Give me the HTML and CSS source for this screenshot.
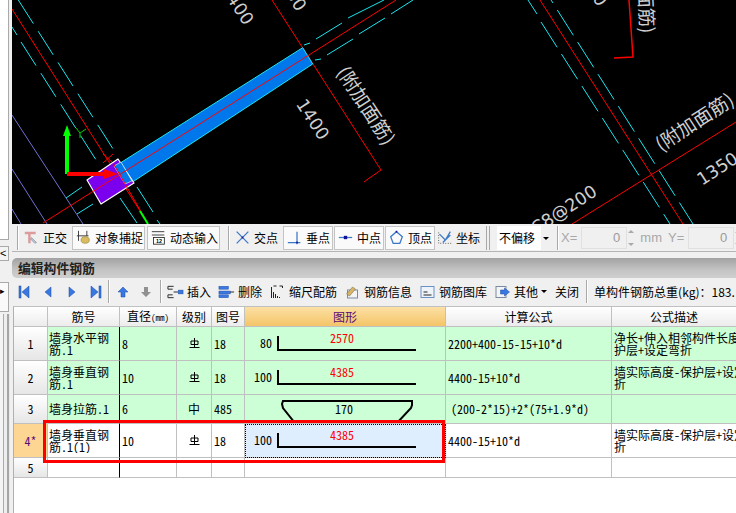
FILE: index.html
```html
<!DOCTYPE html>
<html lang="zh-CN">
<head>
<meta charset="utf-8">
<title>编辑构件钢筋</title>
<link rel="stylesheet" href="styles.css">
</head>
<body>
<div class="app">
  <aside class="strip">
    <div class="strip-white"></div>
    <div class="strip-btn">&lt;</div>
    <div class="strip-box">▸</div>
    <div class="strip-rails"></div>
  </aside>
  <main class="main">
    <svg class="cad" width="724" height="224" viewBox="12 0 724 224">
      <g class="violet">
        <line x1="12" y1="115" x2="83" y2="224"/>
        <line x1="12" y1="169" x2="47" y2="224"/>
        <line x1="12" y1="209" x2="21" y2="224"/>
      </g>
      <g class="cyan">
        <line class="dash-a" x1="18.3" y1="0" x2="115" y2="152"/>
        <line class="dash-a" x1="21" y1="42" x2="98" y2="163"/>
        <line x1="12" y1="27" x2="17" y2="35"/>
        <line x1="120" y1="198" x2="137" y2="223"/>
        <line x1="137" y1="187" x2="153" y2="212"/>
        <line x1="157" y1="220" x2="160" y2="224"/>
        <line x1="66" y1="198" x2="82" y2="187"/>
        <line x1="77" y1="214" x2="93" y2="204"/>
        <line x1="304" y1="45" x2="310" y2="43"/>
        <line x1="316" y1="39" x2="342" y2="23"/>
        <line x1="348" y1="18" x2="384" y2="0"/>
        <line x1="315" y1="60" x2="321" y2="59"/>
        <line x1="327" y1="55" x2="353" y2="39"/>
        <line x1="359" y1="34" x2="385" y2="18"/>
        <line x1="391" y1="14" x2="413" y2="0"/>
        <line x1="528" y1="0" x2="537" y2="14"/>
        <line class="dash-b" x1="541" y1="22" x2="670" y2="224"/>
        <line x1="551" y1="0" x2="553" y2="3"/>
        <line class="dash-b" x1="557.3" y1="10" x2="693" y2="224"/>
      </g>
      <g class="red">
        <line x1="12" y1="9" x2="147" y2="222"/>
        <line x1="272" y1="0" x2="381" y2="170"/>
        <polyline points="381,170 368,179 364,182"/>
        <line x1="540" y1="0" x2="683" y2="224"/>
        <line x1="572" y1="224" x2="736" y2="122"/>
        <polyline class="thick" points="629,0 633,57 614,58"/>
        <line x1="103" y1="154" x2="113" y2="163"/>
        <line x1="103" y1="163" x2="113" y2="154"/>
      </g>
      <polygon class="beam" points="302.7,47.7 312.7,64 133,181.7 120.7,162.7"/>
      <polygon class="base" points="87,180 118,159 134,183 101,204"/>
      <polygon class="beam-end" points="114,166 121,162 132,181 125,184"/>
      <line class="red" x1="43" y1="223" x2="396" y2="0"/>
      <line class="red" x1="113" y1="163" x2="147" y2="222"/>
      <line class="axis-y-stroke" x1="67" y1="174" x2="67" y2="132"/>
      <polygon class="axis-y-head" points="67,125 71,136 63,136"/>
      <polyline class="axis-label" points="76,128 80,133 86,129"/>
      <line class="axis-label" x1="80" y1="133" x2="80" y2="138"/>
      <line class="axis-x-stroke" x1="67" y1="174" x2="106" y2="174"/>
      <polygon class="axis-x-head" points="118,174 104,169 104,179"/>
      <line class="axis-green" x1="140" y1="211" x2="148" y2="224"/>
      <g class="cad-text">
        <text transform="translate(220,-11) rotate(57)">1400</text>
        <text transform="translate(285,-6) rotate(57)">50</text>
        <text transform="translate(295.500,104) rotate(57)">1400</text>
        <text class="cjk" transform="translate(336,72) rotate(57)">(附加面筋)</text>
        <text class="cjk" transform="translate(636,-55) rotate(87)">(附加面筋)</text>
        <text class="cjk" transform="translate(661,152) rotate(-33)">(附加面筋)</text>
        <text transform="translate(702,186) rotate(-33)">1350</text>
        <text transform="translate(536,235) rotate(-33)">C8@200</text>
        <text transform="translate(586,-11) rotate(57)">50</text>
      </g>
    </svg>

    <div class="snapbar">
      <span class="sep"></span>
      <div class="snap">
        <svg class="ico" viewBox="0 0 18 18"><path class="ortho" d="M1 2h13v3H8v11H5V5H1z"/><path class="pen" d="M9 9l6 6-2 1-5-5z"/></svg>
        <span>正交</span>
      </div>
      <div class="snap on wide first">
        <svg class="ico" viewBox="0 0 18 18"><path class="dark" d="M3 1v12M13 1v6M1 7h14"/><ellipse class="hand" cx="11" cy="12" rx="5" ry="4"/></svg>
        <span>对象捕捉</span>
      </div>
      <div class="snap on wide">
        <svg class="ico" viewBox="0 0 18 18"><path class="dark" d="M1 2h15M1 6h15"/><rect class="kbd" x="3" y="9" width="13" height="8"/><text class="kbd-num" x="9.500" y="15.500" text-anchor="middle">12</text></svg>
        <span>动态输入</span>
      </div>
      <span class="sep gap"></span>
      <div class="snap">
        <svg class="ico" viewBox="0 0 18 18"><path class="blue" d="M2 2l14 14M16 2L2 16"/><rect class="navy" x="8" y="8" width="2" height="2"/></svg>
        <span>交点</span>
      </div>
      <div class="snap on mid first">
        <svg class="ico" viewBox="0 0 18 18"><path class="blue" d="M1 15h15M12 2v15"/><rect class="navy" x="11" y="14" width="2" height="2"/></svg>
        <span>垂点</span>
      </div>
      <div class="snap on mid">
        <svg class="ico" viewBox="0 0 18 18"><path class="blue" d="M1 9h16"/><rect class="navy" x="7" y="7" width="4" height="4"/></svg>
        <span>中点</span>
      </div>
      <div class="snap on mid">
        <svg class="ico" viewBox="0 0 18 18"><path class="blue" d="M9 2l7 6-3 8H5L2 8z"/><rect class="navy" x="8" y="1" width="2" height="2"/></svg>
        <span>顶点</span>
      </div>
      <div class="snap last">
        <svg class="ico" viewBox="0 0 18 18"><path class="dots" d="M2 3v13h15"/><path class="blue" d="M3 5l7 7 6-10M7 15l9-9"/></svg>
        <span>坐标</span>
      </div>
      <span class="sep double"></span>
      <div class="offset-select"><span class="offset-text">不偏移</span><span class="caret"></span></div>
      <span class="sep tight"></span>
      <span class="dim">X=</span>
      <div class="spin"><span class="spin-box">0</span><i class="spin-arrows"></i></div>
      <span class="dim mm">mm</span>
      <span class="dim">Y=</span>
      <div class="spin"><span class="spin-box">0</span><i class="spin-arrows"></i></div>
    </div>

    <div class="panel-title">编辑构件钢筋</div>

    <div class="gridbar">
      <div class="navgroup">
        <svg class="nav" viewBox="0 0 12 14"><rect class="navfill" x="1" y="1" width="2" height="12"/><path class="navfill" d="M11 1v12L4 7z"/></svg>
        <svg class="nav" viewBox="0 0 12 14"><path class="navfill" d="M9 2v10L3 7z"/></svg>
        <svg class="nav" viewBox="0 0 12 14"><path class="navfill" d="M3 2v10l6-5z"/></svg>
        <svg class="nav" viewBox="0 0 12 14"><path class="navfill" d="M1 1v12l7-6z"/><rect class="navfill" x="9" y="1" width="2" height="12"/></svg>
      </div>
      <span class="sep tall"></span>
      <div class="navgroup updown">
        <svg class="nav small" viewBox="0 0 12 12"><path class="navfill" d="M6 1l5 5H8v5H4V6H1z"/></svg>
        <svg class="nav small" viewBox="0 0 12 12"><path class="greyfill" d="M4 1h4v5h3l-5 5-5-5h3z"/></svg>
      </div>
      <span class="sep tall wider"></span>
      <div class="cmd"><svg class="cmdico" viewBox="0 0 18 14"><path class="dark" d="M7 1H1v3h5M7 13H1v-3h5"/><path class="dark" d="M7 7h5"/><rect class="navfill" x="12" y="5" width="5" height="4"/></svg><span>插入</span></div>
      <div class="cmd"><svg class="cmdico" viewBox="0 0 18 14"><rect class="navfill" x="1" y="1" width="10" height="3"/><rect class="navfill" x="1" y="6" width="12" height="3"/><rect class="navfill" x="1" y="10" width="10" height="3"/><path class="dark" d="M13 7h4"/></svg><span>删除</span></div>
      <div class="cmd"><svg class="cmdico" viewBox="0 0 14 14"><path class="dark" d="M1 2v11M3 7v6M5 9v4M7 11v2M9 12v1M3 1h3M9 1h3M12 1v2"/></svg><span>缩尺配筋</span></div>
      <div class="cmd"><svg class="cmdico" viewBox="0 0 14 14"><rect class="sheet" x="2" y="5" width="10" height="8"/><path class="pencil" d="M1 9l6-7 3 2-6 7z"/></svg><span>钢筋信息</span></div>
      <div class="cmd"><svg class="cmdico" viewBox="0 0 14 14"><rect class="sheet-blue" x="0.500" y="1.500" width="13" height="11"/><path class="dark" d="M3 7h4M3 10h8"/></svg><span>钢筋图库</span></div>
      <div class="cmd"><svg class="cmdico" viewBox="0 0 14 14"><rect class="sheet" x="0.500" y="1.500" width="10" height="11"/><path class="navfill" d="M5 5h4V3l5 4-5 4V9H5z"/></svg><span>其他</span><span class="mini-caret"></span></div>
      <div class="cmd"><span>关闭</span></div>
      <span class="sep tall close"></span>
      <div class="cmd total"><span>单构件钢筋总重(kg)：183.</span></div>
    </div>

    <div class="table-wrap">
      <table class="rebar">
        <colgroup>
          <col class="c-row"><col class="c-name"><col class="c-dia"><col class="c-grade"><col class="c-fig"><col class="c-shape"><col class="c-calc"><col class="c-desc">
        </colgroup>
        <thead>
          <tr>
            <th></th><th class="black-r">筋号</th><th>直径<small>(mm)</small></th><th>级别</th><th>图号</th><th class="sel-head">图形</th><th>计算公式</th><th>公式描述</th>
          </tr>
        </thead>
        <tbody>
          <tr class="r1 done">
            <td class="rowh">1</td><td class="name black-r"><div class="two">墙身水平钢筋.1</div></td><td>8</td>
            <td class="ctr"><svg class="grade" viewBox="0 0 11 11"><path d="M5.500 0v9M2 3h7v3.500H2zM0.500 9.500h10"/></svg></td><td>18</td>
            <td class="shape"><svg viewBox="0 0 200 33" width="200" height="33"><path class="bar" d="M33 9v14h138"/><text class="txt-red" x="97" y="16" text-anchor="middle">2570</text><text class="txt-blk" x="27" y="21" text-anchor="end">80</text></svg></td>
            <td class="calc">2200+400-15-15+10*d</td><td><div class="desc">净长+伸入相邻构件长度-保<br>护层+设定弯折</div></td>
          </tr>
          <tr class="r2 done">
            <td class="rowh">2</td><td class="name black-r"><div class="two">墙身垂直钢筋.1</div></td><td>10</td>
            <td class="ctr"><svg class="grade" viewBox="0 0 11 11"><path d="M5.500 0v9M2 3h7v3.500H2zM0.500 9.500h10"/></svg></td><td>18</td>
            <td class="shape"><svg viewBox="0 0 200 33" width="200" height="33"><path class="bar" d="M33 9v14h138"/><text class="txt-red" x="97" y="16" text-anchor="middle">4385</text><text class="txt-blk" x="27" y="21" text-anchor="end">100</text></svg></td>
            <td class="calc">4400-15+10*d</td><td><div class="desc">墙实际高度-保护层+设定弯<br>折</div></td>
          </tr>
          <tr class="r3 done">
            <td class="rowh">3</td><td class="name black-r">墙身拉筋.1</td><td>6</td>
            <td class="ctr">中</td><td>485</td>
            <td class="shape"><svg viewBox="0 0 200 28" width="200" height="28"><path class="bar" d="M50 28L38 13l-1-4 1-3h129v4l-1 3-14 15"/><text class="txt-blk" x="99" y="19" text-anchor="middle">170</text></svg></td>
            <td class="calc pad">(200-2*15)+2*(75+1.9*d)</td><td></td>
          </tr>
          <tr class="r4 current">
            <td class="rowh act">4*</td><td class="name black-r"><div class="two">墙身垂直钢筋.1(1)</div></td><td>10</td>
            <td class="ctr"><svg class="grade" viewBox="0 0 11 11"><path d="M5.500 0v9M2 3h7v3.500H2zM0.500 9.500h10"/></svg></td><td>18</td>
            <td class="shape focus"><svg viewBox="0 0 200 33" width="200" height="33"><path class="bar" d="M33 9v14h138"/><text class="txt-red" x="97" y="16" text-anchor="middle">4385</text><text class="txt-blk" x="27" y="21" text-anchor="end">100</text></svg></td>
            <td class="calc">4400-15+10*d</td><td><div class="desc">墙实际高度-保护层+设定弯<br>折</div></td>
          </tr>
          <tr class="r5">
            <td class="rowh">5</td><td class="name black-r"></td><td></td><td></td><td></td><td></td><td></td><td></td>
          </tr>
        </tbody>
      </table>
      <div class="callout"></div>
    </div>
  </main>
</div>
</body>
</html>
```
FILE: styles.css
```css
* { box-sizing: border-box; }
html, body { margin: 0; height: 100%; overflow: hidden; }
body {
  width: 736px; height: 513px; background: #f0f0f0; color: #000;
  font: 12px "Noto Sans CJK SC", "Liberation Sans", sans-serif;
}
.app { display: flex; width: 736px; height: 513px; overflow: hidden; }

/* left strip */
.strip { width: 12px; flex: none; display: flex; flex-direction: column; background: #f0f0f0; }
.strip-white { height: 240px; width: 9px; background: #fff; border: solid #a9a9a9; border-width: 0 1px 1px 0; }
.strip-btn { margin-top: 6px; height: 15px; width: 9px; border: solid #a9a9a9; border-width: 1px 1px 1px 0; font: 11px/13px "Liberation Sans", sans-serif; text-align: left; background: #f4f4f4; }
.strip-box { margin-top: 21px; height: 30px; width: 9px; border: solid #a9a9a9; border-width: 1px 1px 1px 0; font: 9px/16px "Liberation Sans", sans-serif; background: #fafafa; }
.strip-rails { flex: 1; margin-top: 2px; width: 10px; background: linear-gradient(90deg, #f4f4f4 0 3px, #aaa 3px 4px, #eee 4px 7px, #a5a5a5 7px 9px, #e8e8e8 9px); }

.main { flex: 1; min-width: 0; display: flex; flex-direction: column; }

/* cad */
.cad { display: block; flex: none; background: #000; }
.cad line, .cad polyline { fill: none; stroke-width: 1; }
.violet line { stroke: #6f70d0; }
.cyan line { stroke: #19e6f0; }
.cyan .dash-a { stroke-dasharray: 28 9; }
.cyan .dash-b { stroke-dasharray: 30 8; }
.red line, .red polyline, line.red { stroke: #f00; stroke-width: 1; }
.red .thick { stroke-width: 1.5; fill: none; }
.beam { fill: #0078ec; stroke: #19e6f0; stroke-width: 1; }
.base { fill: #7a00ee; stroke: #fff; stroke-width: 1.2; stroke-linejoin: round; }
.beam-end { fill: #0078ec; stroke: #fff; stroke-width: .6; }
.axis-y-stroke { stroke: #00ff00; stroke-width: 4 !important; }
.axis-y-head { fill: #00ff00; }
.axis-x-stroke { stroke: #f00; stroke-width: 4 !important; }
.axis-x-head { fill: #f00; }
.axis-label { stroke: #00d000; fill: none; }
.axis-green { stroke: #00ff00; stroke-width: 2 !important; }
.cad-text text { fill: #cfcfcf; font: 17.500px "DejaVu Sans", sans-serif; }
.cad-text .cjk { font: 19px "Noto Sans CJK SC", sans-serif; }

/* snap toolbar */
.snapbar {
  height: 28px; flex: none; display: flex; align-items: center; padding-left: 5px;
  background: #f0f0f0; border-bottom: 1px solid #b5b5b5; white-space: nowrap; overflow: hidden;
}
.sep { flex: none; width: 2px; height: 24px; margin-right: 5px; border-left: 1px solid #a8a8a8; border-right: 1px solid #fff; }
.sep.gap { margin: 0 5px 0 8px; }
.sep.double { width: 4px; margin: 0 7px 0 6px; border-right: 1px solid #a8a8a8; }
.sep.tight { margin: 0 0 0 5px; }
.snap { display: flex; align-items: center; gap: 4px; height: 24px; flex: none; font-size: 12px; }
.snap.on { background: #fafafa; border: 1px solid #c4c4c4; padding-left: 3px; margin-left: 1px; }
.snap.wide { width: 73px; margin-left: 2px; }
.snap.mid { width: 50px; }
.snap.first { margin-left: 5px; }
.snap.last { margin-left: 2px; }
.ico { width: 15px; height: 15px; flex: none; }
.ico path, .ico ellipse, .ico rect { fill: none; }
.ico .ortho { fill: #dc9c9c; }
.ico .pen { fill: #b8c4d4; stroke: #667; stroke-width: .5; }
.ico .dark, .cmdico .dark { stroke: #222; stroke-width: 1; fill: none; }
.ico .hand { fill: #d9bc60; stroke: #8a6a20; stroke-width: .6; }
.ico .kbd { fill: #fff; stroke: #222; }
.kbd-num { font: 700 6.500px "Liberation Sans", sans-serif; }
.ico .blue { stroke: #3a78c8; stroke-width: 1.5; }
.ico .navy { fill: #10109a; }
.ico .dots { stroke: #333; stroke-dasharray: 1 2; }
.offset-select { width: 55px; height: 24px; background: #fff; display: flex; align-items: center; font-size: 12px; flex: none; }
.offset-text { flex: 1; padding-left: 2px; }
.caret { width: 11px; height: 24px; background: #f0f0f0; position: relative; }
.caret::after { content: ""; position: absolute; left: 2px; top: 11px; border: 3.500px solid transparent; border-top-color: #000; border-bottom: 0; }
.dim { color: #a8a8a8; font: 13px "Liberation Sans", sans-serif; margin: 0 4px 0 2px; flex: none; }
.dim.mm { margin-left: 4px; }
.spin { flex: none; width: 55px; height: 22px; display: flex; align-items: center; color: #9a9a9a; font: 13px "Liberation Sans", sans-serif; }
.spin-box { width: 46px; height: 22px; border: 1px solid #e0e0e0; text-align: right; padding-right: 6px; line-height: 20px; }
.spin-arrows { width: 9px; height: 16px; position: relative; display: block; }
.spin-arrows::before, .spin-arrows::after { content: ""; position: absolute; left: 1px; border: 3px solid transparent; }
.spin-arrows::before { top: 0; border-bottom-color: #aaa; border-top: 0; }
.spin-arrows::after { bottom: 0; border-top-color: #aaa; border-bottom: 0; }

/* title */
.panel-title {
  margin-top: 6px; height: 20px; flex: none; padding-left: 6px; line-height: 19px;
  font-weight: 700; font-size: 12.800px; color: #222; border-radius: 5px 0 0 5px;
  background: linear-gradient(#a2a2a2, #c4c4c4 60%, #cfcfcf);
}

/* grid toolbar */
.gridbar { height: 27px; flex: none; display: flex; align-items: center; padding-left: 6px; white-space: nowrap; overflow: hidden; }
.navgroup { display: flex; align-items: center; gap: 12px; flex: none; }
.navgroup.updown { gap: 11px; margin-left: 2px; }
.nav { width: 12px; height: 14px; flex: none; }
.nav.small { width: 12px; height: 12px; }
.sep.tall { height: 23px; margin: 0 5px 0 6px; }
.sep.tall.wider { margin-left: 8px; }
.sep.tall.close { margin: 0 6px 0 0; }
.navfill { fill: #3878e0; stroke: #1848a8; stroke-width: .5; }
.greyfill { fill: #909090; }
.cmd { display: flex; align-items: center; gap: 3px; flex: none; margin-right: 7px; font-size: 12px; }
.cmdico { width: 17px; height: 14px; flex: none; }
.cmdico .sheet { fill: #f4f4f4; stroke: #7a8aa0; }
.cmdico .sheet-blue { fill: #eef3fa; stroke: #6a90c8; }
.cmdico .pencil { fill: #d8b468; stroke: #6a6a40; stroke-width: .5; }
.mini-caret { width: 0; height: 0; border: 3px solid transparent; border-top-color: #000; border-bottom: 0; margin-right: 1px; }

/* table */
.table-wrap { position: relative; flex: 1; margin: 1px 0 0 1px; background: #fff; border-top: 1px solid #c0c0c0; border-left: 1px solid #b0b0b0; overflow: hidden; }
.rebar { table-layout: fixed; border-collapse: separate; border-spacing: 0; width: 723px; font-size: 12px; line-height: 12px; font-feature-settings: "hwid"; }
.c-row { width: 34px; } .c-name { width: 72px; } .c-dia { width: 57px; } .c-grade { width: 35px; }
.c-fig { width: 33px; } .c-shape { width: 201px; } .c-calc { width: 166px; } .c-desc { width: 125px; }
.rebar th, .rebar td { border-right: 1px solid #c0c0c0; border-bottom: 1px solid #c0c0c0; padding: 0 0 0 2px; overflow: hidden; }
.rebar th { height: 20px; font-weight: 400; text-align: center; background: linear-gradient(#fff, #ececec); padding: 0; }
.rebar th small { font-size: 9px; }
.rebar .sel-head { background: linear-gradient(#fce0a4, #f4c468); color: #5a0a78; }
.rebar .black-r { border-right-color: #000; }
.rebar th.black-r { border-right-color: #c0c0c0; }
.r1 td, .r2 td, .r4 td { height: 34px; }
.r3 td { height: 29px; }
.r5 td { height: 20px; }
.done td { background: #ccffd6; }
.current td { background: #fff; }
.rebar .rowh { padding: 0; text-align: center; background: linear-gradient(#fff, #e6e6e6); }
.rebar .act { background: #fdd694; color: #5a0a78; }
.rebar .name { padding-left: 1px; }
.two { overflow: hidden; max-height: 24px; word-break: break-all; }
.desc { overflow: hidden; white-space: nowrap; }
.ctr { text-align: center; }
.rebar td.ctr { padding: 0; }
.grade { width: 11px; height: 11px; display: block; margin: 0 auto; }
.grade path { fill: none; stroke: #000; stroke-width: 1; }
.rebar td.shape { padding: 0; }
.shape svg { display: block; }
.bar { fill: none; stroke: #000; stroke-width: 2; }
.txt-red, .txt-blk { font: 12px "Noto Sans CJK SC", sans-serif; font-feature-settings: "hwid"; }
.txt-red { fill: #f00; }
.txt-blk { fill: #000; }
.rebar td.focus { background: #deeeff; outline: 1px dotted #000; outline-offset: -1px; }
.rebar .calc { padding-left: 2px; }
.rebar .pad { padding-left: 5px; }
.callout { position: absolute; left: 29px; top: 113px; width: 402px; height: 43px; border: 3.500px solid #f00; pointer-events: none; }
```
